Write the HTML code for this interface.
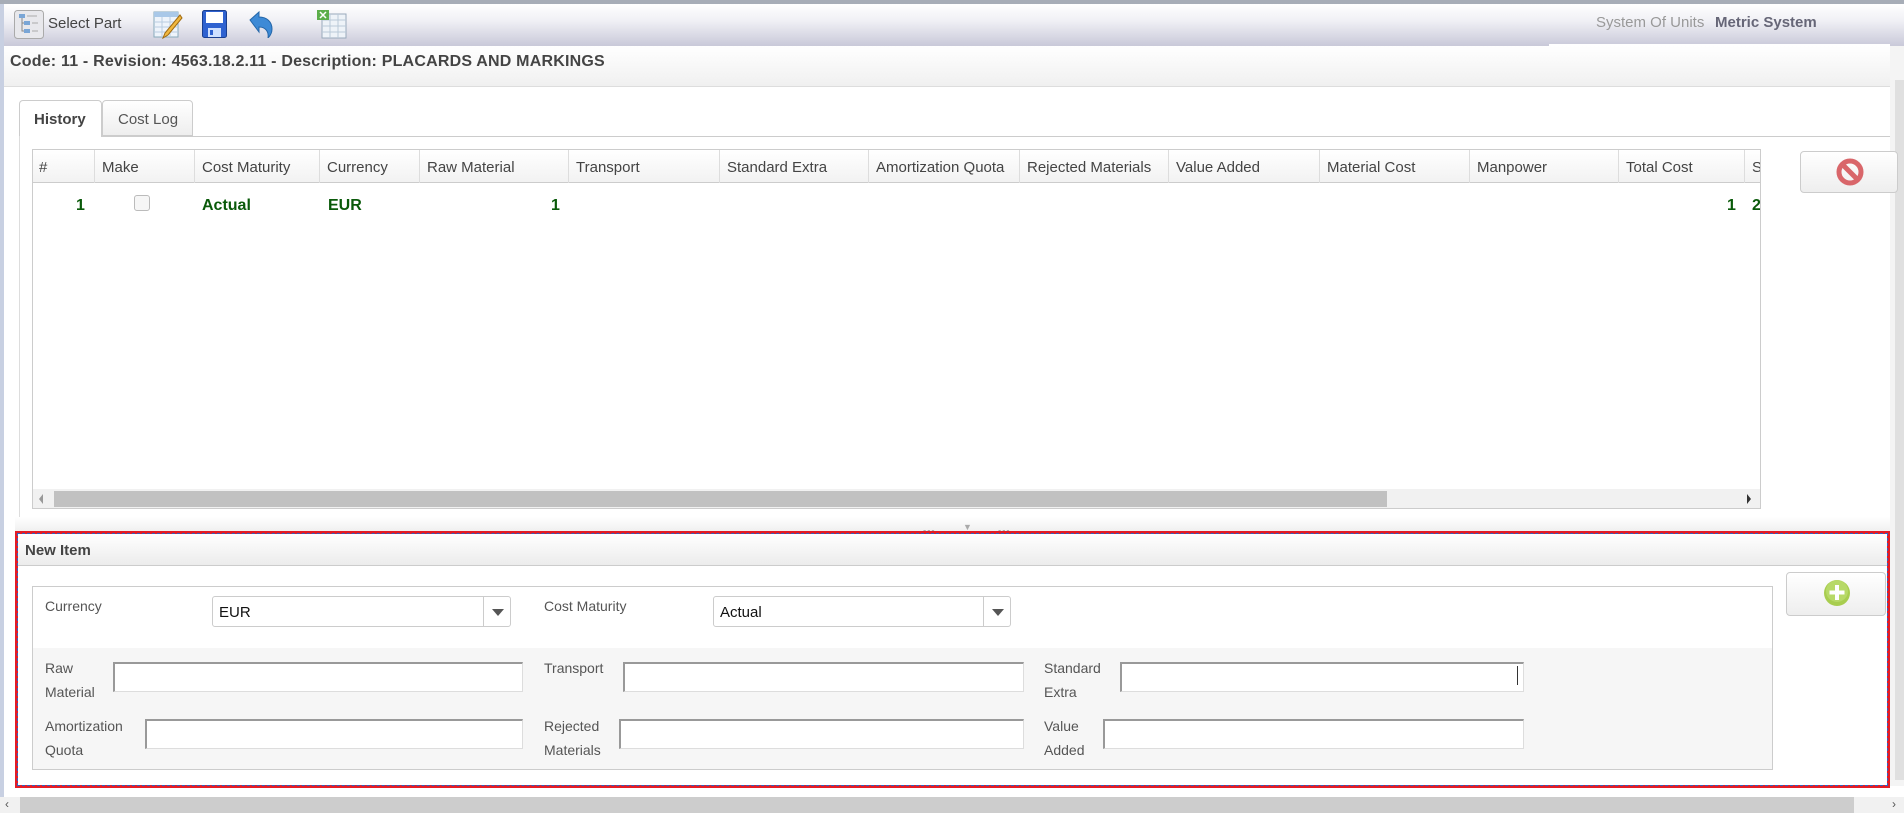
<!DOCTYPE html>
<html><head><meta charset="utf-8"><style>
*{box-sizing:border-box;margin:0;padding:0}
body{width:1904px;height:813px;overflow:hidden;background:#fff;font-family:"Liberation Sans",sans-serif;position:relative;color:#333}
.a{position:absolute}
.th{position:absolute;top:0;height:33px;border-left:1px solid #ddd;padding:9px 0 0 7px;font-size:15px;color:#444;white-space:nowrap;overflow:hidden}
.lbl{position:absolute;font-size:14px;color:#555;line-height:24px}
.inp{position:absolute;height:30px;background:#fff;border:1px solid #ddd;border-top:2px solid #999;border-left:2px solid #999}
.sel{position:absolute;height:31px;background:#fff;border:1px solid #ccc;border-radius:3px;font-size:15px;color:#111;padding:7px 6px}
.sel i{position:absolute;right:0;top:0;width:27px;height:29px;border-left:1px solid #ccc}
.sel i:after{content:"";position:absolute;left:8px;top:12px;border:6px solid transparent;border-top:7px solid #555}
.g{color:#0a5a0a;font-weight:bold;font-size:16px}
</style></head><body>
<div class="a" style="left:0;top:0;width:1904px;height:4px;background:#a7adb7"></div>
<div class="a" style="left:0;top:4px;width:1904px;height:42px;background:linear-gradient(#fff,#f0f0f5 40%,#c9c9d9)"></div>
<div class="a" style="left:1549px;top:44px;width:341px;height:3px;background:#fff"></div>
<div class="a" style="left:0;top:4px;width:4px;height:809px;background:#c8d0e2"></div>
<svg class="a" style="left:14px;top:10px" width="30" height="29"><rect x="0.5" y="0.5" width="29" height="28" rx="3" fill="#e8e8ec" stroke="#aaa"/><rect x="5" y="4" width="6" height="4" fill="#7aa6d6"/><rect x="10" y="11" width="6" height="4" fill="#7aa6d6"/><rect x="10" y="19" width="6" height="4" fill="#7aa6d6"/><path d="M8 8v13h2M8 13h2" stroke="#888" fill="none"/><path d="M13 6h10M18 13h6M18 21h6" stroke="#aaa"/></svg>
<div class="a" style="left:48px;top:15px;font-size:15px;color:#444">Select Part</div>
<svg class="a" style="left:153px;top:9px" width="30" height="30"><rect x="1" y="3" width="24" height="25" fill="#eef4fb" stroke="#8ab"/><rect x="1" y="3" width="24" height="5" fill="#a9c8e8"/><path d="M1 13h24M1 18h24M1 23h24M9 8v20M17 8v20" stroke="#b9cde0"/><path d="M27 6L12 24l-2 5 5-3L29 9z" fill="#f0b840" stroke="#a06a10"/></svg>
<svg class="a" style="left:202px;top:10px" width="25" height="28"><rect x="0.5" y="0.5" width="24" height="27" rx="2" fill="#2f62d0" stroke="#1a3f90"/><rect x="4" y="2" width="17" height="11" fill="#fff"/><rect x="6" y="18" width="13" height="9" fill="#cfe0ff"/><rect x="8" y="20" width="3" height="5" fill="#2f62d0"/></svg>
<svg class="a" style="left:248px;top:10px" width="26" height="28"><path d="M2 10L11 2v5c8 0 13 5 13 12 0 4-2 7-4 9 1-7-3-11-9-11v5z" fill="#3d8ad6" stroke="#2466a8"/></svg>
<svg class="a" style="left:316px;top:9px" width="31" height="30"><rect x="6" y="5" width="24" height="24" fill="#eef3f8" stroke="#9ab"/><path d="M6 11h24M6 17h24M6 23h24M14 5v24M22 5v24" stroke="#b9cad8"/><rect x="1" y="1" width="12" height="10" fill="#5cae4a"/><path d="M4 3l6 6M10 3l-6 6" stroke="#fff" stroke-width="1.5"/></svg>
<div class="a" style="left:1596px;top:14px;font-size:15px;color:#999">System Of Units</div>
<div class="a" style="left:1715px;top:14px;font-size:15px;color:#667;font-weight:bold">Metric System</div>
<div class="a" style="left:4px;top:46px;width:1886px;height:41px;background:linear-gradient(#fff,#f0f0f0);border-bottom:1px solid #ddd"></div>
<div class="a" style="left:10px;top:53px;font-size:16px;font-weight:bold;color:#444;letter-spacing:0.2px">Code: 11 - Revision: 4563.18.2.11 - Description: PLACARDS AND MARKINGS</div>
<div class="a" style="left:1890px;top:46px;width:14px;height:740px;background:#f4f4f4"></div>
<div class="a" style="left:1895px;top:80px;width:9px;height:700px;background:#e0e0e0"></div>
<div class="a" style="left:19px;top:100px;width:83px;height:37px;background:#fff;border:1px solid #ccc;border-bottom:none;border-radius:4px 4px 0 0;font-size:15px;font-weight:bold;color:#444;padding:10px 0 0 14px">History</div>
<div class="a" style="left:102px;top:100px;width:91px;height:36px;background:linear-gradient(#fff,#eee);border:1px solid #ccc;border-radius:4px 4px 0 0;font-size:15px;color:#555;padding:10px 0 0 15px">Cost Log</div>
<div class="a" style="left:102px;top:136px;width:1788px;height:1px;background:#ccc"></div>
<div class="a" style="left:19px;top:136px;width:1px;height:390px;background:#ddd"></div>
<div class="a" style="left:32px;top:149px;width:1729px;height:360px;border:1px solid #ccc;overflow:hidden">
<div class="a" style="left:0;top:0;width:1729px;height:33px;background:linear-gradient(#fff,#f2f2f2);border-bottom:1px solid #ccc"></div>
<div class="th" style="left:-1px;width:62px;border:none">#</div>
<div class="th" style="left:61px;width:100px">Make</div>
<div class="th" style="left:161px;width:125px">Cost Maturity</div>
<div class="th" style="left:286px;width:100px">Currency</div>
<div class="th" style="left:386px;width:149px">Raw Material</div>
<div class="th" style="left:535px;width:151px">Transport</div>
<div class="th" style="left:686px;width:149px">Standard Extra</div>
<div class="th" style="left:835px;width:151px">Amortization Quota</div>
<div class="th" style="left:986px;width:149px">Rejected Materials</div>
<div class="th" style="left:1135px;width:151px">Value Added</div>
<div class="th" style="left:1286px;width:150px">Material Cost</div>
<div class="th" style="left:1436px;width:149px">Manpower</div>
<div class="th" style="left:1585px;width:126px">Total Cost</div>
<div class="th" style="left:1711px;width:30px">St</div>
<div class="a g" style="left:43px;top:47px">1</div>
<div class="a" style="left:101px;top:45px;width:16px;height:16px;border:1px solid #bbb;border-radius:3px;background:#f6f6f6"></div>
<div class="a g" style="left:169px;top:47px">Actual</div>
<div class="a g" style="left:295px;top:47px">EUR</div>
<div class="a g" style="left:518px;top:47px">1</div>
<div class="a g" style="left:1694px;top:47px">1</div>
<div class="a g" style="left:1719px;top:47px">2</div>
<div class="a" style="left:0;top:339px;width:1729px;height:20px;background:#f1f1f1"></div>
<div class="a" style="left:21px;top:341px;width:1333px;height:16px;background:#c1c1c1"></div>
<div class="a" style="left:6px;top:344px;border:5px solid transparent;border-right:4px solid #999;border-left:none"></div>
<div class="a" style="left:1714px;top:344px;border:5px solid transparent;border-left:4px solid #333;border-right:none"></div>
</div>
<div class="a" style="left:1800px;top:151px;width:98px;height:42px;border:1px solid #ccc;border-radius:4px;background:linear-gradient(#fff,#eee)"></div>
<svg class="a" style="left:1836px;top:158px" width="28" height="28"><circle cx="14" cy="14" r="11" fill="none" stroke="#d9666a" stroke-width="5"/><path d="M7 7l14 14" stroke="#d9666a" stroke-width="5"/></svg>
<div class="a" style="left:15px;top:517px;width:1875px;height:14px;background:linear-gradient(#fff,#f0f0f0)"></div>
<div class="a" style="left:923px;top:526px;font-size:9px;color:#aaa;letter-spacing:1px">▪▪▪</div>
<div class="a" style="left:963px;top:522px;font-size:9px;color:#aaa">▼</div>
<div class="a" style="left:998px;top:526px;font-size:9px;color:#aaa;letter-spacing:1px">▪▪▪</div>
<div class="a" style="left:15px;top:531px;width:1875px;height:257px;border:3px solid #e31c25"></div>
<div class="a" style="left:17px;top:533px;width:1871px;height:253px;border:1px dashed #3060c0"></div>
<div class="a" style="left:18px;top:534px;width:1869px;height:32px;background:linear-gradient(#fff,#ececec);border-bottom:1px solid #ccc"></div>
<div class="a" style="left:25px;top:542px;font-size:15px;font-weight:bold;color:#444">New Item</div>
<div class="a" style="left:32px;top:586px;width:1741px;height:184px;border:1px solid #ccc;background:#fff"></div>
<div class="a" style="left:33px;top:648px;width:1739px;height:121px;background:#f6f6f6"></div>
<div class="lbl" style="left:45px;top:594px">Currency</div>
<div class="sel" style="left:212px;top:596px;width:299px">EUR<i></i></div>
<div class="lbl" style="left:544px;top:594px">Cost Maturity</div>
<div class="sel" style="left:713px;top:596px;width:298px">Actual<i></i></div>
<div class="lbl" style="left:45px;top:656px">Raw<br>Material</div>
<div class="inp" style="left:113px;top:662px;width:410px"></div>
<div class="lbl" style="left:544px;top:656px">Transport</div>
<div class="inp" style="left:623px;top:662px;width:401px"></div>
<div class="lbl" style="left:1044px;top:656px">Standard<br>Extra</div>
<div class="inp" style="left:1120px;top:662px;width:404px"></div>
<div class="a" style="left:1517px;top:666px;width:1px;height:19px;background:#333"></div>
<div class="lbl" style="left:45px;top:714px">Amortization<br>Quota</div>
<div class="inp" style="left:145px;top:719px;width:378px"></div>
<div class="lbl" style="left:544px;top:714px">Rejected<br>Materials</div>
<div class="inp" style="left:619px;top:719px;width:405px"></div>
<div class="lbl" style="left:1044px;top:714px">Value<br>Added</div>
<div class="inp" style="left:1103px;top:719px;width:421px"></div>
<div class="a" style="left:1786px;top:572px;width:100px;height:44px;border:1px solid #ccc;border-radius:4px;background:linear-gradient(#fff,#eee)"></div>
<svg class="a" style="left:1822px;top:578px" width="30" height="30"><circle cx="15" cy="15" r="13" fill="#a8cd4f"/><circle cx="15" cy="13" r="11" fill="#b7d967"/><path d="M15 7v15M7.5 14.5h15" stroke="#fff" stroke-width="4"/></svg>
<div class="a" style="left:0;top:797px;width:1904px;height:16px;background:#cdcdcd"></div>
<div class="a" style="left:0;top:797px;width:20px;height:16px;background:#f1f1f1;font-size:12px;color:#555;padding-left:5px">&lsaquo;</div>
<div class="a" style="left:1854px;top:797px;width:50px;height:16px;background:#f1f1f1;font-size:12px;color:#555;padding-left:38px">&rsaquo;</div>
</body></html>
